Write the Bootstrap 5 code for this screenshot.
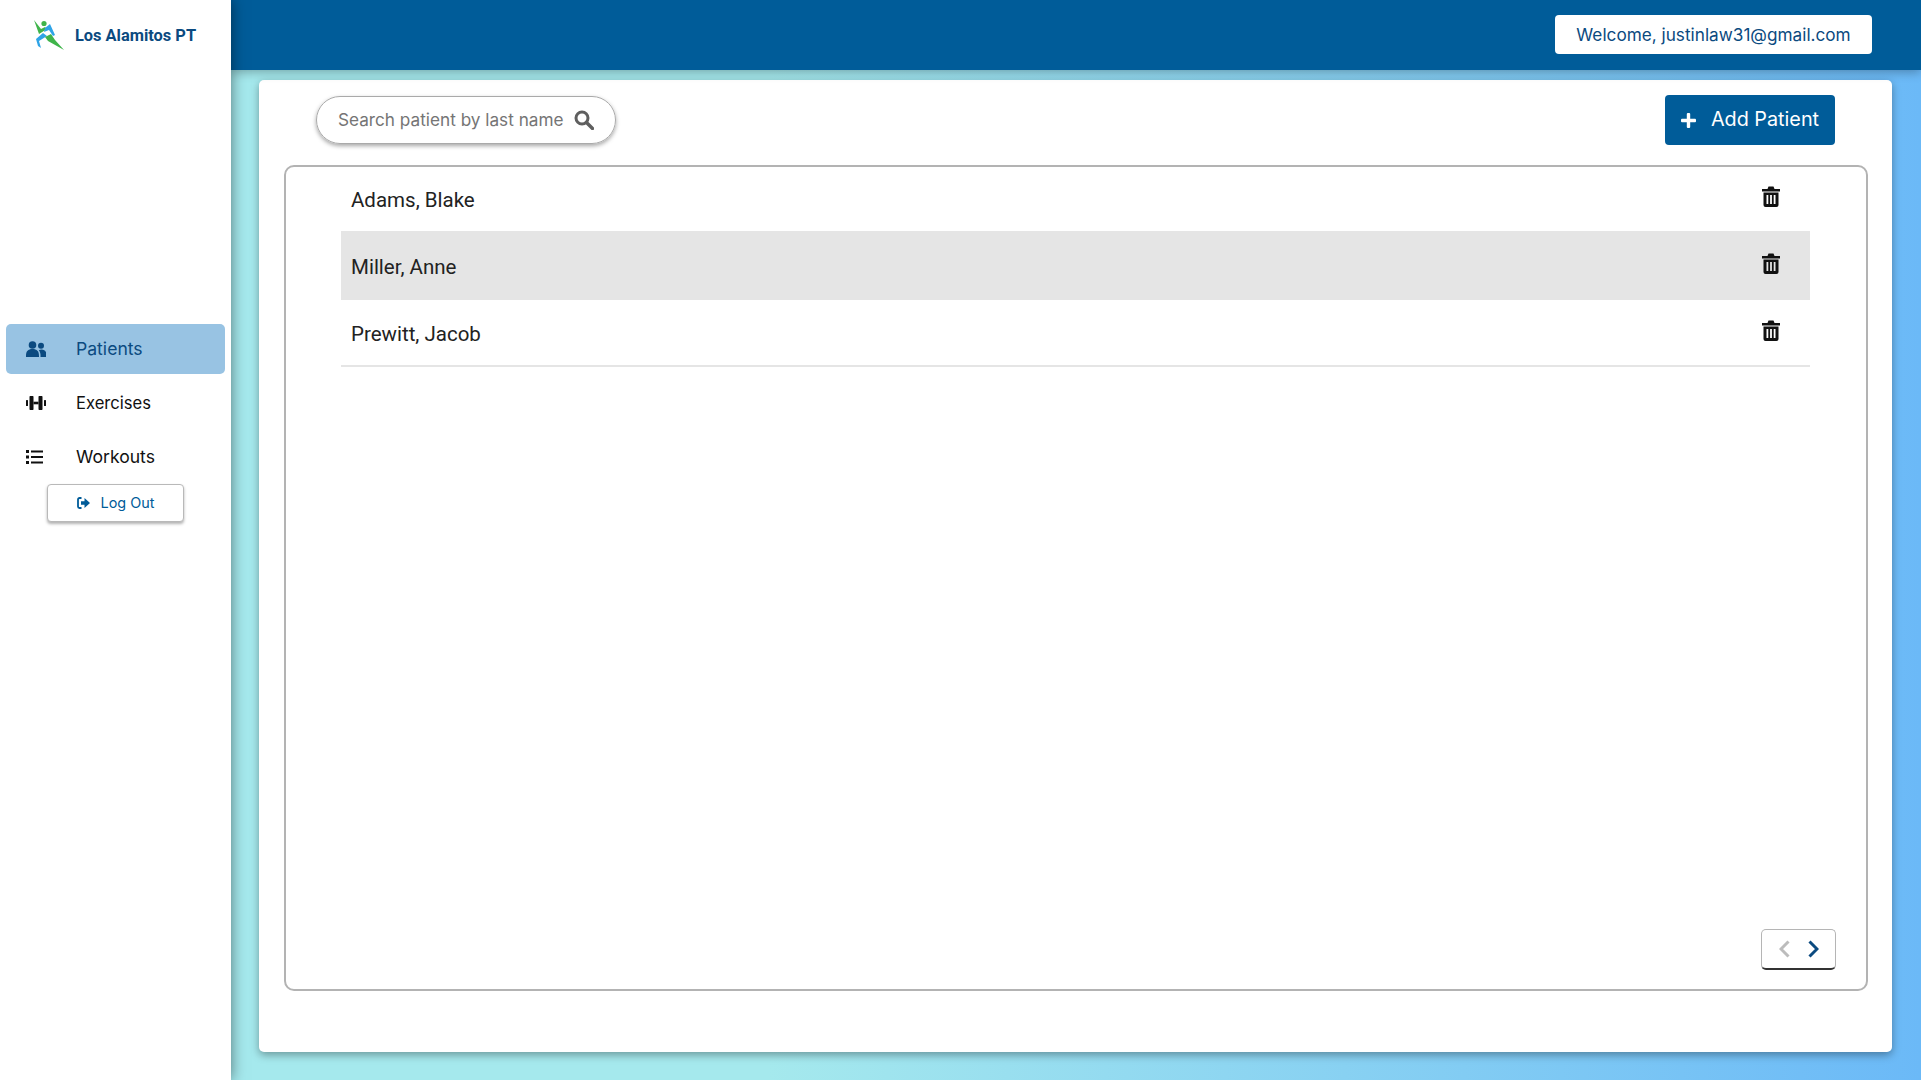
<!DOCTYPE html>
<html lang="en">
<head>
  <meta charset="UTF-8">
  <meta name="viewport" content="width=device-width, initial-scale=1">
  <title>Patients</title>
  <link href="https://cdn.jsdelivr.net/npm/bootstrap@5.3.0/dist/css/bootstrap.min.css" rel="stylesheet">
  <style>
    html, body { height: 100%; }
    body { font-family: "Inter", "Liberation Sans", sans-serif; background: linear-gradient(90deg, #a5e9ed 0%, #a5e9ed 40%, #6bb9f7 100%); overflow: hidden; }
    .side-panel { width: 231px; background: #fff; box-shadow: 0 0 14px rgba(0,0,0,.5); z-index: 2; }
    .brand-row { height: 72px; padding-left: 34px; gap: 9px; }
    .brand-name { font-family: "Roboto", sans-serif; font-weight: 700; font-size: 16.4px; color: #0b4a80; }
    .side-menu { margin-top: 252px; padding: 0 6px; }
    .side-item { height: 50px; margin-bottom: 4px; padding-left: 20px; gap: 30px; font-size: 17.6px; color: #111; border-radius: 5px; text-decoration: none; }
    .side-item svg { width: 20px; flex: none; }
    .side-item.is-active { background: #98c3e3; color: #0b4a80; }
    .side-item.is-narrow { font-size: 16.6px; }
    .logout-btn { width: 137px; height: 38px; margin: -2px auto 0; gap: 11px; font-size: 14.4px; color: #005c99; background: #fff; border: 1px solid #b9b9b9; border-radius: 4px; box-shadow: 0 2px 3px rgba(0,0,0,.3); }
    .top-strip { height: 70px; padding-right: 49px; background: #005c99; box-shadow: 0 2px 10px rgba(0,0,0,.3); position: relative; z-index: 1; }
    .welcome-box { width: 317px; height: 39px; margin-bottom: 1px; font-size: 17.2px; color: #0b4a80; background: #fff; border-radius: 4px; }
    .page-body { padding: 10px 29px 28px 28px; min-height: 0; }
    .main-sheet { background: #fff; border-radius: 5px; box-shadow: 0 3px 8px rgba(0,0,0,.35); padding: 15px 24px 61px 25px; }
    .tool-row { margin-bottom: 20px; padding: 0 33px 0 32px; }
    .search-pill { width: 300px; height: 48px; padding: 0 21px 0 21px; border: 1px solid #aaa; border-radius: 24px; box-shadow: 0 2px 4px rgba(0,0,0,.35); font-size: 17.2px; color: #757575; }
    .add-btn { width: 170px; height: 50px; gap: 15px; font-size: 19.8px; color: #fff; background: #005c99; border: 0; border-radius: 4px; }
    .patient-frame { border: 2px solid #b3b3b3; border-radius: 10px; padding: 0 56px 0 55px; position: relative; }
    .patient-row { height: 64px; padding: 0 10px; gap: 12px; font-family: "Roboto", sans-serif; font-size: 20.5px; color: #222; }
    .patient-row.is-hover { height: 69px; background: #e5e5e5; }
    .patient-row.is-last { height: 67px; border-bottom: 2px solid #e5e5e5; }
    .patient-row span { padding-top: 3px; }
    .patient-row svg { margin: -5px 20px 0 0; }
    .pager-box { position: absolute; right: 30px; bottom: 19px; width: 75px; height: 41px; gap: 18px; border: 1px solid #b5b5b5; border-bottom: 2px solid #333; border-radius: 5px; background: #fff; }
  </style>
</head>
<body class="d-flex">

  <aside class="side-panel flex-shrink-0 d-flex flex-column">
    <div class="brand-row d-flex align-items-center">
      <svg width="32" height="32" viewBox="0 0 32 32">
        <circle cx="10" cy="3.5" r="2.6" fill="#3fb44a"/>
        <polygon points="0,0 7,9 11,7 13,9 5,14" fill="#3fb44a"/>
        <polygon points="11,8 16,4 21,15 19,16 15,10 10,12" fill="#2fa4e7"/>
        <polygon points="9,13 13,16 5,21 7,28 4,26 2,19" fill="#2fa4e7"/>
        <polygon points="11,17 17,14 21,20 30,30 14,21" fill="#3fb44a"/>
      </svg>
      <span class="brand-name">Los Alamitos PT</span>
    </div>

    <nav class="side-menu d-flex flex-column">
      <a href="#" class="side-item is-active d-flex align-items-center">
        <svg height="16" viewBox="0 0 20 16" fill="#0b4a80"><circle cx="6.5" cy="4" r="3.8"/><circle cx="15" cy="4.8" r="3"/><path d="M0 15c0-5 2-7 6.5-7s6.500 2 6.500 7v1H0zM14.500 16v-2c0-2-.6-3.500-1.700-4.800.8-.6 1.700-.8 2.700-.8 3 0 5 2 5 5.600V16z"/></svg>
        <span>Patients</span>
      </a>
      <a href="#" class="side-item is-narrow d-flex align-items-center">
        <svg height="14" viewBox="0 0 20 14" fill="#111"><rect x="0" y="4" width="2" height="6" rx=".5"/><rect x="3.500" y="0" width="4" height="14" rx=".7"/><rect x="7.500" y="5.700" width="5" height="2.600"/><rect x="12.500" y="0" width="4" height="14" rx=".7"/><rect x="18" y="4" width="2" height="6" rx=".5"/></svg>
        <span>Exercises</span>
      </a>
      <a href="#" class="side-item d-flex align-items-center">
        <svg height="14" viewBox="0 0 20 14" fill="#111"><rect x="0" y="0" width="3" height="3"/><rect x="5" y=".5" width="12" height="2"/><rect x="0" y="5.500" width="3" height="3"/><rect x="5" y="6" width="12" height="2"/><rect x="0" y="11" width="3" height="3"/><rect x="5" y="11.500" width="12" height="2"/></svg>
        <span>Workouts</span>
      </a>
      <button type="button" class="logout-btn d-flex align-items-center justify-content-center">
        <svg width="13" height="12" viewBox="0 0 13 12" fill="#005c99"><path d="M4.500 1H2.500A1.500 1.500 0 0 0 1 2.500v7A1.500 1.500 0 0 0 2.500 11h2" fill="none" stroke="#005c99" stroke-width="1.800"/><path d="M4 4.200h3.500V1L13 6l-5.500 5V7.800H4z"/></svg>
        <span>Log Out</span>
      </button>
    </nav>
  </aside>

  <div class="flex-grow-1 d-flex flex-column">
    <header class="top-strip d-flex align-items-center justify-content-end flex-shrink-0">
      <div class="welcome-box d-flex align-items-center justify-content-center">Welcome, justinlaw31@gmail.com</div>
    </header>

    <main class="page-body flex-grow-1 d-flex flex-column">
      <section class="main-sheet flex-grow-1 d-flex flex-column">
        <div class="tool-row d-flex align-items-center justify-content-between">
          <div class="search-pill d-flex align-items-center justify-content-between">
            <span>Search patient by last name</span>
            <svg width="20" height="20" viewBox="0 0 20 20" fill="none" stroke="#5f5f5f"><circle cx="8" cy="8" r="6" stroke-width="3"/><line x1="12.500" y1="12.500" x2="18.500" y2="18.500" stroke-width="3.400" stroke-linecap="round"/></svg>
          </div>
          <button type="button" class="add-btn d-flex align-items-center justify-content-center">
            <svg width="15" height="15" viewBox="0 0 15 15" fill="#fff"><rect x="5.800" y="0" width="3.400" height="15" rx="1"/><rect x="0" y="5.800" width="15" height="3.400" rx="1"/></svg>
            <span>Add Patient</span>
          </button>
        </div>

        <div class="patient-frame flex-grow-1">
          <div class="patient-row d-flex align-items-center justify-content-between">
            <span>Adams, Blake</span>
            <svg width="18" height="21" viewBox="0 0 18 21" fill="#111"><path d="M0 3h5.500l1-2.500h5l1 2.500H18v2.500H0z"/><path fill-rule="evenodd" d="M1.500 6.500h15V19a2 2 0 0 1-2 2h-11a2 2 0 0 1-2-2zM4.500 9v9h1.800V9zM8.100 9v9h1.800V9zM11.700 9v9h1.800V9z"/></svg>
          </div>
          <div class="patient-row is-hover d-flex align-items-center justify-content-between">
            <span>Miller, Anne</span>
            <svg width="18" height="21" viewBox="0 0 18 21" fill="#111"><path d="M0 3h5.500l1-2.500h5l1 2.500H18v2.500H0z"/><path fill-rule="evenodd" d="M1.500 6.500h15V19a2 2 0 0 1-2 2h-11a2 2 0 0 1-2-2zM4.500 9v9h1.800V9zM8.100 9v9h1.800V9zM11.700 9v9h1.800V9z"/></svg>
          </div>
          <div class="patient-row is-last d-flex align-items-center justify-content-between">
            <span>Prewitt, Jacob</span>
            <svg width="18" height="21" viewBox="0 0 18 21" fill="#111"><path d="M0 3h5.500l1-2.500h5l1 2.500H18v2.500H0z"/><path fill-rule="evenodd" d="M1.500 6.500h15V19a2 2 0 0 1-2 2h-11a2 2 0 0 1-2-2zM4.500 9v9h1.800V9zM8.100 9v9h1.800V9zM11.700 9v9h1.800V9z"/></svg>
          </div>

          <div class="pager-box d-flex align-items-center justify-content-center">
            <svg width="11" height="18" viewBox="0 0 11 18" fill="none" stroke="#bcbcbc" stroke-width="3"><path d="M9.500 1.500 2 9l7.500 7.500"/></svg>
            <svg width="11" height="18" viewBox="0 0 11 18" fill="none" stroke="#0b4a80" stroke-width="3"><path d="M1.500 1.500 9 9l-7.500 7.500"/></svg>
          </div>
        </div>
      </section>
    </main>
  </div>

</body>
</html>
